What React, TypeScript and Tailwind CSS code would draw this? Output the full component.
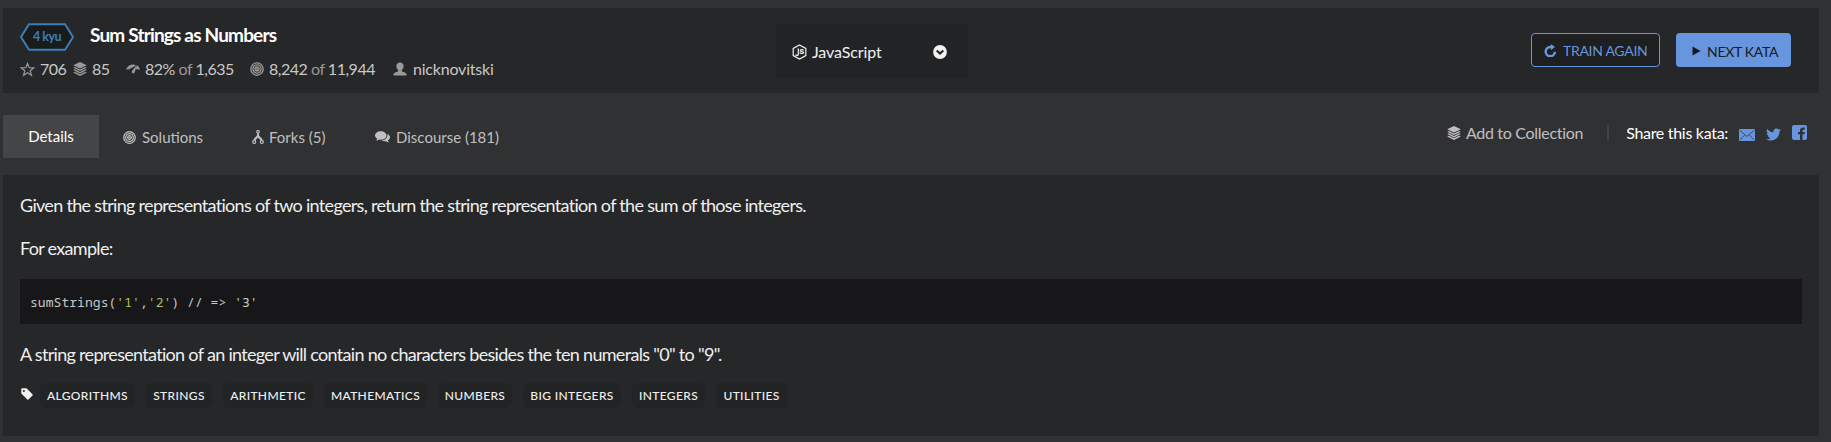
import type { ReactNode } from "react";
import { FaTwitter } from "react-icons/fa";

type IconProps = { className?: string };

const Star = ({ className }: IconProps) => (
  <svg viewBox="0 0 16 16" className={className} fill="none" stroke="currentColor" strokeWidth="1.3">
    <path d="M8 1.6l1.8 4.5 4.9.2-3.8 3.1 1.3 4.8L8 11.5l-4.2 2.7 1.3-4.8-3.8-3.1 4.9-.2z" />
  </svg>
);

const Layers = ({ className }: IconProps) => (
  <svg viewBox="0 0 14 14" className={className} fill="currentColor">
    <path d="M7 0L13.800 3.300 7 6.600.2 3.300z" />
    <path d="M.2 5.700l1.700-.8L7 7.500l5.100-2.600 1.700.8L7 9.100z" />
    <path d="M.2 8.100l1.700-.8L7 9.900l5.100-2.600 1.700.8L7 11.500z" />
    <path d="M.2 10.500l1.700-.8L7 12.300l5.100-2.600 1.700.8L7 13.900z" />
  </svg>
);

const Gauge = ({ className }: IconProps) => (
  <svg viewBox="0 0 14 10" className={className} fill="currentColor">
    <path d="M0 5.8C1.300 2.300 4 .6 7.200.600L10 1.200 6.800 3.500C5 3.500 4.300 4.300 3.600 5.500 2.300 5 1 5.200 0 5.800z" />
    <path d="M11.200 1.600C12.700 2.500 13.600 4 14 5.800 12.700 5.100 11.800 5 10.600 5.500L9.800 4.300z" />
    <path d="M11 .800L8.700 8.300C8.300 9.600 6.700 9.700 6.100 8.800 5.600 8 5.800 7.200 6.400 6.500z" />
  </svg>
);

const Target = ({ className }: IconProps) => (
  <svg viewBox="0 0 14 14" className={className} fill="none" stroke="currentColor" strokeWidth="1.35">
    <circle cx="7" cy="7" r="6.2" />
    <circle cx="7" cy="7" r="4.100" />
    <circle cx="7" cy="7" r="2" />
    <circle cx="7" cy="7" r="1" fill="currentColor" stroke="none" />
  </svg>
);

const User = ({ className }: IconProps) => (
  <svg viewBox="0 0 14 14" className={className} fill="currentColor">
    <path d="M7 .5c2.200 0 3.600 1.400 3.600 3.600 0 1.800-.7 3.200-1.700 4v1.200c0 .5 4.700 1.200 4.700 3.200 0 .8-.6 1-1.400 1H1.800c-.8 0-1.400-.2-1.400-1 0-2 4.700-2.700 4.700-3.200V8.100c-1-.8-1.700-2.200-1.700-4C3.400 1.900 4.800.5 7 .5z" />
  </svg>
);

const NodeHex = ({ className }: IconProps) => (
  <svg viewBox="0 0 15 16" className={className} fill="none" stroke="currentColor" strokeWidth="1.2">
    <path d="M7.500.9l6.300 3.500v7.200l-6.300 3.500-6.300-3.500V4.400z" />
    <path d="M6.300 4.600v6.200l-1.500.8-1.500-.8M11.500 6.400c-.3-1-3.400-1-3.400.1 0 1.500 3.500.5 3.500 2 0 1.300-3.600 1.300-3.800-.2" />
  </svg>
);

const ChevronDisc = ({ className }: IconProps) => (
  <svg viewBox="0 0 14 14" className={className}>
    <circle cx="7" cy="7" r="6.900" fill="#f0f0f0" />
    <path d="M3.700 5.500L7 8.600l3.300-3.100" fill="none" stroke="#222325" strokeWidth="2" />
  </svg>
);

const Redo = ({ className }: IconProps) => (
  <svg viewBox="0 0 13 13" className={className}>
    <path d="M7.500 3H6a4.600 4.600 0 1 0 4.900 4.800" fill="none" stroke="currentColor" strokeWidth="2.500" />
    <path d="M6.800 0l4.200 3-4.200 3.200z" fill="currentColor" />
  </svg>
);

const Fork = ({ className }: IconProps) => (
  <svg viewBox="0 0 12 14" className={className} fill="none" stroke="currentColor">
    <circle cx="6" cy="1.800" r="1.300" strokeWidth="1.100" />
    <circle cx="2.200" cy="11.900" r="1.500" strokeWidth="1.200" />
    <circle cx="9.800" cy="11.900" r="1.500" strokeWidth="1.200" />
    <path d="M6 3.200v3M6 5.500C5.600 7.600 3 8 2.400 10M6 5.500C6.400 7.600 9 8 9.600 10" strokeWidth="2" />
  </svg>
);

const Comments = ({ className }: IconProps) => (
  <svg viewBox="0 0 15 12" className={className} fill="currentColor">
    <path d="M5.800.3c3.200 0 5.700 1.900 5.700 4.300S9 8.800 5.800 8.800c-.6 0-1.100 0-1.600-.2-.9.700-2 1.100-3.200 1.200.6-.6 1-1.200 1.200-2C.8 7 0 5.900 0 4.600 0 2.200 2.600.3 5.800.3z" />
    <path d="M12.500 3c1.500.7 2.500 1.900 2.500 3.300 0 1.300-.8 2.400-2.100 3.100.2.800.6 1.400 1.200 2-1.300-.1-2.400-.5-3.300-1.200-1.800.3-3.400-.1-4.600-.7 3.700-.1 6.500-2.400 6.300-6.500z" />
  </svg>
);

const Mail = ({ className }: IconProps) => (
  <svg viewBox="0 0 16 12" className={className}>
    <rect width="16" height="12" rx=".8" fill="#6795de" />
    <path d="M.8 1.200L8 7.500l7.200-6.300M1 11l4.700-5M15 11l-4.700-5" fill="none" stroke="#303133" strokeWidth=".7" />
  </svg>
);

const Facebook = ({ className }: IconProps) => (
  <svg viewBox="0 0 15 15" className={className}>
    <rect width="15" height="15" rx="2" fill="#6795de" />
    <path d="M8 15V9.300H6V7h2V5.500C8 3.500 9.200 2.500 11 2.500h1.800v2.200h-1.200c-.8 0-1.100.3-1.100 1V7h2.200l-.3 2.300h-1.900V15z" fill="#303133" />
  </svg>
);

const Tag = ({ className }: IconProps) => (
  <svg viewBox="0 0 12 12" className={className}>
    <path d="M.3 1.300C.3.700.7.300 1.300.300h4.200L11.500 6.300c.4.400.4.800 0 1.200l-4 4c-.4.400-.8.400-1.200 0L.3 5.500z" fill="#f0f0f0" />
    <circle cx="2.900" cy="2.900" r="1" fill="#262729" />
  </svg>
);

const Stat = ({ icon, children, className }: { icon: ReactNode; children: ReactNode; className: string }) => (
  <span className={`flex items-center whitespace-pre ${className}`}>
    {icon}
    {children}
  </span>
);

const tags = [
  { name: "ALGORITHMS", width: "w-[95px]" },
  { name: "STRINGS", width: "w-[66px]" },
  { name: "ARITHMETIC", width: "w-[90px]" },
  { name: "MATHEMATICS", width: "w-[103px]" },
  { name: "NUMBERS", width: "w-[74px]" },
  { name: "BIG INTEGERS", width: "w-[98px]" },
  { name: "INTEGERS", width: "w-[73px]" },
  { name: "UTILITIES", width: "w-[71px]" },
];

function Header() {
  return (
    <header className="flex h-[85px] bg-[#262729]">
      <div className="w-[773px] pl-[17px] pt-[14px]">
        <div className="flex h-[30px] items-center">
          <div className="relative grid h-7 w-[54px] place-items-center">
            <svg viewBox="0 0 54 28" className="absolute inset-0 h-7 w-[54px]">
              <path d="M9 1.200h36L53 14l-8 12.800H9L1 14z" fill="#1a1c1c" stroke="#3c7ebb" strokeWidth="1.900" />
            </svg>
            <span className="relative text-[12.5px] font-bold leading-none tracking-[-0.5px] text-[#3c7ebb]">4 kyu</span>
          </div>
          <h1 className="-mt-1 ml-4 whitespace-nowrap text-[19px] font-bold tracking-[-0.82px] text-white">Sum Strings as Numbers</h1>
        </div>
        <div className="mt-[5px] flex h-6 items-center text-[16px] tracking-[-0.48px] text-[#c8c8c8]">
          <Stat className="w-[53px]" icon={<Star className="mr-[5px] h-[15px] w-[15px] text-[#999]" />}>706</Stat>
          <Stat className="w-[53px]" icon={<Layers className="mr-[5px] h-[14px] w-[14px] text-[#999]" />}>85</Stat>
          <Stat className="w-[124px]" icon={<Gauge className="mr-[5px] h-[10px] w-[14px] text-[#999]" />}>82%<span className="text-[#999]"> of </span>1,635</Stat>
          <Stat className="w-[143px]" icon={<Target className="mr-[5px] h-[14px] w-[14px] text-[#999]" />}>8,242<span className="text-[#999]"> of </span>11,944</Stat>
          <Stat className="tracking-[-0.2px]" icon={<User className="mr-[6px] h-[14px] w-[14px] text-[#999]" />}>nicknovitski</Stat>
        </div>
      </div>
      <div className="mt-4 flex h-[55px] w-[192px] items-center rounded-sm bg-[#222325] pl-4 pr-[21px] text-[16px] tracking-[-0.1px] text-[#f0f0f0]">
        <NodeHex className="mr-[5px] h-[16px] w-[15px]" />
        <span className="flex-1">JavaScript</span>
        <ChevronDisc className="h-[14px] w-[14px]" />
      </div>
      <div className="ml-auto mr-7 mt-[25px] flex h-[34px] gap-4 text-[14px] tracking-[-0.3px]">
        <button className="flex w-[129px] items-center whitespace-nowrap rounded-[4px] border border-[#6795de] bg-[#1d1f20] pl-[12px] pt-px text-[#6795de]">
          <Redo className="mr-[6px] h-[13px] w-[13px]" />TRAIN AGAIN
        </button>
        <button className="flex w-[115px] items-center whitespace-nowrap rounded-[4px] bg-[#6795de] pl-4 pt-[2px] text-[#161a20]">
          <svg viewBox="0 0 9 10" className="mr-[6px] h-[10px] w-[9px]"><path d="M.5.500L8.500 5 .5 9.500z" fill="currentColor" /></svg>NEXT KATA
        </button>
      </div>
    </header>
  );
}

function Tabs() {
  return (
    <nav className="mt-[22px] flex h-[43px] text-[15px] text-[#c0c0c0]">
      <div className="flex w-24 items-center justify-center bg-[#444547] text-white">Details</div>
      <div className="flex items-center pl-6 pt-px">
        <Target className="mr-[6px] h-[13px] w-[13px]" /><span className="w-[110px]">Solutions</span>
        <Fork className="mr-[5px] h-[14px] w-3" /><span className="w-[106px]">Forks (5)</span>
        <Comments className="mr-[6px] h-3 w-[15px]" />Discourse (181)
      </div>
      <div className="ml-auto mr-3 flex h-[35px] items-center text-[16px] tracking-[-0.3px]">
        <Layers className="mr-[5px] h-[14px] w-[14px]" />
        <span>Add to Collection</span>
        <span className="ml-6 mr-[17px] h-[15px] w-0.5 bg-[#424345]" />
        <span className="mr-[11px] text-white">Share this kata:</span>
        <Mail className="mr-[11px] mt-[4px] h-3 w-4" />
        <FaTwitter className="mr-[11px] mt-[3px] h-[15px] w-[15px] text-[#6795de]" />
        <Facebook className="h-[15px] w-[15px]" />
      </div>
    </nav>
  );
}

export default function App() {
  return (
    <div className="h-[442px] bg-[#303133] pl-[3px] pr-3 pt-2 font-['Lato',sans-serif]">
      <Header />
      <Tabs />
      <main className="mt-[17px] h-[261px] bg-[#262729] pl-[17px] pr-[17px] pt-4 text-[18px] tracking-[-0.69px] text-[#f0f0f0]">
        <p className="h-[43px] leading-[28px]">Given the string representations of two integers, return the string representation of the sum of those integers.</p>
        <p className="h-[45px] leading-[28px]">For example:</p>
        <pre className="flex h-[45px] items-center bg-[#171719] pl-[10px] pt-[3px] font-['Noto_Sans_Mono','DejaVu_Sans_Mono',monospace] text-[13px] tracking-[0.05px] text-[#c5c8c6]">sumStrings(<span className="text-[#b5bd68]">'1'</span>,<span className="text-[#b5bd68]">'2'</span>) // =&gt; '3'</pre>
        <p className="mt-4 leading-[28px]">A string representation of an integer will contain no characters besides the ten numerals "0" to "9".</p>
        <div className="mt-[15px] flex items-center gap-[11px] text-[12px] font-medium tracking-[0.35px]">
          <Tag className="-mr-[4px] -mt-1 ml-px h-3 w-3" />
          {tags.map((tag) => (
            <span key={tag.name} className={`flex h-[25px] items-center justify-center whitespace-nowrap rounded-md bg-[#222325] pt-px ${tag.width}`}>{tag.name}</span>
          ))}
        </div>
      </main>
    </div>
  );
}
